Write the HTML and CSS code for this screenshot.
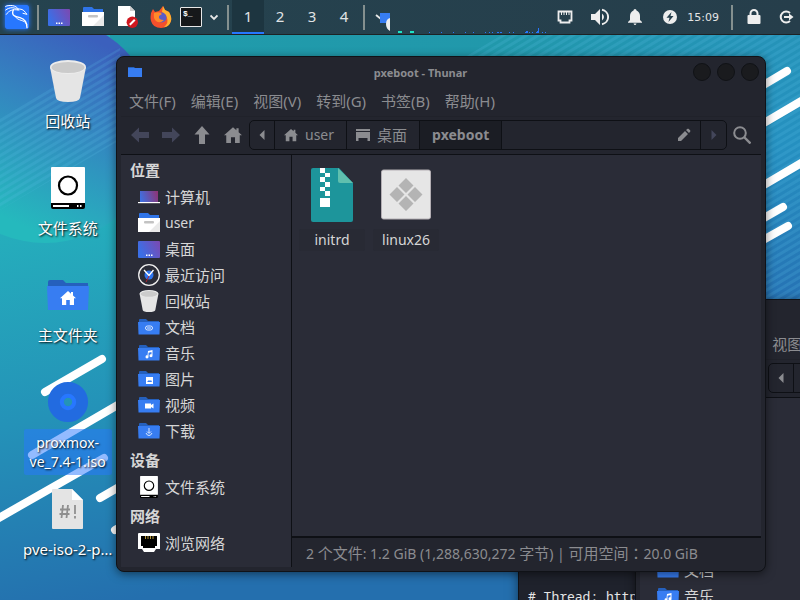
FILE: index.html
```
<!DOCTYPE html>
<html lang="zh-CN">
<head>
    <meta charset="UTF-8">
    <meta name="viewport" content="width=device-width, initial-scale=1.0">
    <title>pxeboot - Thunar</title>
    <link rel="stylesheet" href="styles.css">
</head>
<body>
    <!-- Shared icons -->
    <svg class="defs" aria-hidden="true">
        <defs>
            <linearGradient id="screenFill" x1="0" y1="0.4" x2="1" y2="0">
                <stop offset="0" stop-color="#3b6fe6"/>
                <stop offset="1" stop-color="#7d48b0"/>
            </linearGradient>
            <linearGradient id="laptopFill" x1="0" y1="0.5" x2="1" y2="0.3">
                <stop offset="0" stop-color="#3f6fe0"/>
                <stop offset="1" stop-color="#8c3577"/>
            </linearGradient>
        </defs>
        <symbol id="folder" viewBox="0 0 22 22">
            <path d="M1 4q0-1 1-1h6l2 2h11v4H1z" fill="#2560bd"/>
            <path d="M0 6h22l-.5 12.500h-21z" fill="#377df2"/>
        </symbol>
        <symbol id="user-folder" viewBox="0 0 22 22">
            <path d="M1 6V2q0-1 1-1h8l2 2h9v4H1z" fill="#2f74e8"/>
            <path d="M0 6h22v14H0z" fill="#fff"/>
            <path d="M22 9v11H11z" fill="#e9e9e9"/>
            <rect x="6" y="9" width="10" height="2.500" rx="1" fill="#c3c3c3"/>
        </symbol>
        <symbol id="screen" viewBox="0 0 22 22">
            <rect y="3" width="22" height="17" rx="1" fill="url(#screenFill)"/>
            <path d="M8 16.500h1.500v1.500H8zm2.500 0H12v1.500h-1.500zm2.500 0h1.500v1.500H13z" fill="#fff"/>
        </symbol>
        <symbol id="laptop" viewBox="0 0 22 22">
            <rect x="2" y="5" width="18" height="11" fill="url(#laptopFill)"/>
            <rect y="16" width="22" height="1.200" fill="#fff"/>
        </symbol>
        <symbol id="clock" viewBox="0 0 22 22">
            <circle cx="11" cy="11" r="10.300" fill="none" stroke="#eee" stroke-width="1.300"/>
            <circle cx="11" cy="11" r="4.500" fill="#2d74ee"/>
            <path d="M6 6l5 5.500L15.500 6" fill="none" stroke="#fff" stroke-width="1.300"/>
            <path d="M11 12l-3 6" stroke="#b3202c"/>
        </symbol>
        <symbol id="trash" viewBox="0 0 36 42">
            <path d="M0 7l6 31q1 4 12 4t12-4l6-31z" fill="#e5e5e5"/>
            <ellipse cx="18" cy="7" rx="18" ry="7" fill="#ececec"/>
            <ellipse cx="18" cy="7.500" rx="16.500" ry="5.500" fill="#cbcbcb"/>
        </symbol>
        <symbol id="drive" viewBox="0 0 36 42">
            <rect x="1" width="34" height="37" rx="1" fill="#fff"/>
            <circle cx="18" cy="18.500" r="9" fill="#fff" stroke="#000" stroke-width="2.200"/>
            <path d="M1 36h34v4q0 2-2 2H3q-2 0-2-2z" fill="#000"/>
            <path d="M3 38h16v2H3zm24 0h1.500v2H27zm3 0h1.500v2H30z" fill="#fff"/>
        </symbol>
        <symbol id="note" viewBox="0 0 22 22">
            <path d="M10 9l4.500-1v5.500a1.500 1.500 0 1 1-1-1.200V10l-3 .7v4a1.500 1.500 0 1 1-1-1.200z" fill="#fff"/>
        </symbol>
        <symbol id="house" viewBox="0 0 16 16">
            <path d="M8 1l3 2.700V2h2v3.500L16 8.300h-2V15H9.800v-5H6.200v5H2V8.300H0z"/>
        </symbol>
        <symbol id="tri-left" viewBox="0 0 6 10">
            <path d="M5.500 0v10L.5 5z"/>
        </symbol>
        <symbol id="arrow-left" viewBox="0 0 18 16">
            <path d="M0 8l8-7.500V5h10v6H8v4.500z"/>
        </symbol>
    </svg>

    <div class="desktop">
        <svg class="wallpaper" viewBox="0 0 800 600" preserveAspectRatio="xMidYMid slice" aria-hidden="true">
            <defs>
                <linearGradient id="sea" gradientUnits="userSpaceOnUse" x1="60" y1="220" x2="130" y2="600">
                    <stop offset="0" stop-color="#25aebc"/>
                    <stop offset="0.500" stop-color="#2492b8"/>
                    <stop offset="1" stop-color="#246fae"/>
                </linearGradient>
                <linearGradient id="seaRight" gradientUnits="userSpaceOnUse" x1="780" y1="40" x2="800" y2="300">
                    <stop offset="0" stop-color="#2593b8"/>
                    <stop offset="0.400" stop-color="#2590c0"/>
                    <stop offset="1" stop-color="#2672b4"/>
                </linearGradient>
                <linearGradient id="seaTop">
                    <stop offset="0" stop-color="#209cab"/>
                    <stop offset="0.600" stop-color="#2198ab"/>
                    <stop offset="1" stop-color="#2593b8"/>
                </linearGradient>
                <linearGradient id="ball" gradientUnits="userSpaceOnUse" x1="105" y1="45" x2="20" y2="225">
                    <stop offset="0" stop-color="#3b60bd"/>
                    <stop offset="0.400" stop-color="#3484c0"/>
                    <stop offset="1" stop-color="#25b9bd"/>
                </linearGradient>
                <pattern id="stripes" width="20" height="6" patternUnits="userSpaceOnUse" patternTransform="rotate(-31)">
                    <rect width="20" height="3" fill="#5cc4e8" opacity="0.180"/>
                </pattern>
            </defs>
            <rect width="800" height="600" fill="url(#sea)"/>
            <rect x="110" width="655" height="90" fill="url(#seaTop)"/>
            <rect x="764" width="36" height="300" fill="url(#seaRight)"/>
            <circle cx="45" cy="130" r="113" fill="url(#ball)"/>
            <path d="M0 118L120 48v92L0 210z" fill="url(#stripes)"/>
            <path d="M560 0h240v300h-40V60H460z" fill="url(#stripes)"/>
            <g stroke="#fff" stroke-width="8" stroke-linecap="round">
                <path d="M45 392L102 359M32 455L140 392M-10 523L104 458M100 498L150 469M115 530L150 510"/>
                <path d="M740 99L787 71M740 137L820 90M740 199L820 152M740 232L783 207M740 253L788 226"/>
            </g>
        </svg>

        <!-- Top panel -->
        <header class="panel">
            <nav class="launchers">
                <button class="launcher" aria-label="Applications">
                    <svg class="kali" viewBox="0 0 72 72">
                        <rect width="72" height="72" rx="4" fill="#2777ff"/>
                        <g fill="none" stroke="#fff" stroke-width="3" stroke-linecap="round">
                            <path d="M1 4C16-1 32 0 41 13"/>
                            <path d="M2 15C14 6 28 5 42 16"/>
                            <path d="M4 28C12 16 24 12 38 15"/>
                            <path d="M37 12C48 11 56 14 61 22L66 28L54 25"/>
                            <path d="M25 14C18 32 30 35 45 38C62 43 66 53 66 68" stroke-width="4"/>
                            <path d="M30 34C40 50 58 42 65 58"/>
                        </g>
                    </svg>
                </button>
                <span class="sep"></span>
                <button class="launcher" aria-label="Show desktop"><svg class="i22"><use href="#screen"/></svg></button>
                <button class="launcher" aria-label="Files"><svg class="i22"><use href="#user-folder"/></svg></button>
                <button class="launcher" aria-label="Text editor">
                    <svg class="i22" viewBox="0 0 22 22">
                        <path d="M2 0h12l5 5v15H2z" fill="#fff"/>
                        <path d="M14 0v5h5z" fill="#cfcfcf"/>
                        <circle cx="16.300" cy="16.300" r="5.700" fill="#d0171f"/>
                        <path d="M13.800 18.800l5-5" stroke="#fff" stroke-width="2"/>
                    </svg>
                </button>
                <button class="launcher" aria-label="Firefox">
                    <svg class="i22" viewBox="0 0 22 22">
                        <path d="M3 3l2 3 4-1 4-5 2 4 4 2q3 5 2 9-2 7-10 7T1 15Q-.5 8 3 3z" fill="#f4502c"/>
                        <path d="M13 0l2 4 4 2q3 5 2 9-2 6-7 6 5-4 3-9-1-4-5-6z" fill="#ffb02e"/>
                        <circle cx="11.500" cy="11.500" r="5" fill="#5a5cc8"/>
                        <path d="M4 7q6-2 8 1l-3 2q-1 4 5 4-4 4-8 1-3-3-2-8z" fill="#ff8a2a"/>
                    </svg>
                </button>
                <button class="launcher term-btn" aria-label="Terminal"><span class="term-icon">$_</span></button>
                <button class="launcher small" aria-label="More">
                    <svg class="i8" viewBox="0 0 8 8"><path d="M.5 2.500L4 6l3.500-3.500" fill="none" stroke="#e8e8e8" stroke-width="1.800"/></svg>
                </button>
                <span class="sep"></span>
            </nav>
            <nav class="workspaces">
                <button class="workspace current">1</button>
                <button class="workspace">2</button>
                <button class="workspace">3</button>
                <button class="workspace">4</button>
            </nav>
            <span class="sep"></span>
            <svg class="tasks" viewBox="0 0 16 20" aria-hidden="true">
                <path d="M1 4l5 4" stroke="#e8e8e8" stroke-width="1.800"/>
                <path d="M5 2h10v10H5z" fill="#377df2"/>
                <path d="M15 7v13q-4-2-4-7t4-6z" fill="#eee"/>
            </svg>
            <svg class="graph" viewBox="0 0 148 8" aria-hidden="true">
                <path d="M0 5h4v2H0zM12 5h4v2h-4z" fill="#1ee3c4"/>
                <path d="M31 6h1v1h-1zM43 6h1v1h-1zM55 6h1v1h-1zM67 6h1v1h-1zM75 6h1v1h-1zM87 6h1v1h-1zM91 6h1v1h-1zM94 6h1v1h-1zM99 6h2v1h-2zM102 6h2v1h-2zM111 6h1v1h-1zM115 6h1v1h-1zM127 6h1v-1h2v2h-3zM131 6h1v1h-1zM134 6h1v1h-1zM138 6h1V5h1V2h1v5h-3zM144 6h1v1h-1zM147 6h1v1h-1z" fill="#2777ff"/>
            </svg>
            <div class="tray">
                <button class="tray-btn" aria-label="Network">
                    <svg class="i18" viewBox="0 0 18 18"><path d="M2.500 3.500h13v9h-2v2h-9v-2h-2z" fill="none" stroke="#eee" stroke-width="1.800"/><path d="M5.500 4v3M8 4v3M10.500 4v3M13 4v3" stroke="#eee"/></svg>
                </button>
                <button class="tray-btn" aria-label="Volume">
                    <svg class="i18" viewBox="0 0 18 18"><path d="M0 6h4l5-5v16l-5-5H0z" fill="#eee"/><path d="M11 5.500q4 3.500 0 7z" fill="#eee"/><path d="M11 1.800a7.300 7.300 0 0 1 0 14.400" fill="none" stroke="#eee" stroke-width="1.900"/></svg>
                </button>
                <button class="tray-btn" aria-label="Notifications">
                    <svg class="i18" viewBox="0 0 18 18"><path d="M9 1q1.500 0 1.500 1.500Q14 4 14 8v4l2 2v.8H2V14l2-2V8q0-4 3.500-5.500Q7.500 1 9 1zM7.500 15.500h3Q10 17 9 17t-1.500-1.500z" fill="#eee"/></svg>
                </button>
                <button class="tray-btn" aria-label="Power">
                    <svg class="i18" viewBox="0 0 18 18"><circle cx="9" cy="9" r="7" fill="#eee"/><path d="M10.500 4L5.500 9.800h3L7.500 14l5-6h-3z" fill="#26404d"/></svg>
                </button>
                <time class="time">15:09</time>
                <span class="sep"></span>
                <button class="tray-btn" aria-label="Lock">
                    <svg class="i18" viewBox="0 0 18 18"><rect x="2.500" y="7" width="13" height="9" rx="1" fill="#eee"/><path d="M5.500 8V5.500a3.500 3.500 0 0 1 7 0V8" fill="none" stroke="#eee" stroke-width="2"/></svg>
                </button>
                <button class="tray-btn" aria-label="Log out">
                    <svg class="i18" viewBox="0 0 18 18"><path d="M13 5a5.500 5.500 0 1 0 0 8" fill="none" stroke="#eee" stroke-width="2"/><path d="M7 8h5V5.500L16.500 9 12 12.500V10H7z" fill="#eee"/></svg>
                </button>
            </div>
        </header>

        <!-- Desktop shortcuts -->
        <nav class="shortcuts">
            <a class="shortcut" href="#"><svg class="i48" viewBox="0 0 48 48"><use href="#trash" x="6" y="3" width="36" height="42"/></svg><span class="caption">回收站</span></a>
            <a class="shortcut" href="#"><svg class="i48" viewBox="0 0 48 48"><use href="#drive" x="6" y="3" width="36" height="42"/></svg><span class="caption">文件系统</span></a>
            <a class="shortcut" href="#">
                <svg class="i48" viewBox="0 0 48 48">
                    <path d="M4 11q0-2 2-2h13l3 3h22v6H4z" fill="#2560bd"/>
                    <path d="M3 15h42l-1 24H4z" fill="#377df2"/>
                    <use href="#house" x="16" y="19" width="16" height="16" fill="#fff"/>
                </svg>
                <span class="caption">主文件夹</span>
            </a>
            <a class="shortcut selected" href="#">
                <svg class="i48" viewBox="0 0 48 48">
                    <circle cx="24" cy="24" r="12.300" fill="none" stroke="#226be0" stroke-width="15.500"/>
                    <circle cx="24" cy="24" r="6.200" fill="none" stroke="#2777ff" stroke-width="4"/>
                </svg>
                <span class="caption" lang="en">proxmox-<br>ve_7.4-1.iso</span>
            </a>
            <a class="shortcut" href="#">
                <svg class="i48" viewBox="0 0 48 48">
                    <path d="M8 5q0-1 1-1h19l11 11v28q0 1-1 1H9q-1 0-1-1z" fill="#e4e4e4"/>
                    <path d="M28 4v11h11z" fill="#fff"/>
                    <path d="M19 20l-1.500 13M24 20l-1.500 13M16 24.500h10M15.500 29h10M31 20v9M31 31v2.500" stroke="#8f8f8f" stroke-width="1.800" fill="none"/>
                </svg>
                <span class="caption">pve-iso-2-p…</span>
            </a>
        </nav>

        <!-- Terminal behind the file managers -->
        <section class="window terminal">
            <pre class="terminal-text"># Thread: http</pre>
        </section>

        <!-- Second file manager, mostly covered -->
        <section class="window files back">
            <div class="titlebar"></div>
            <div class="menubar">
                <button class="menu">文件(F)</button>
                <button class="menu">编辑(E)</button>
                <button class="menu">视图(V)</button>
            </div>
            <div class="toolbar">
                <div class="tools">
                    <button class="tool" aria-label="Back"></button>
                    <button class="tool" aria-label="Forward"></button>
                    <button class="tool" aria-label="Up"></button>
                    <button class="tool" aria-label="Home"></button>
                </div>
                <div class="pathbar">
                    <button class="crumb edge" aria-label="Previous"><svg class="tri"><use href="#tri-left"/></svg></button>
                </div>
            </div>
            <div class="content">
                <aside class="sidebar">
                    <h2 class="group">位置</h2>
                    <a class="place" href="#"><svg class="i22"><use href="#laptop"/></svg>计算机</a>
                    <a class="place" href="#"><svg class="i22"><use href="#user-folder"/></svg><span lang="en">user</span></a>
                    <a class="place" href="#"><svg class="i22"><use href="#screen"/></svg>桌面</a>
                    <a class="place" href="#"><svg class="i22"><use href="#clock"/></svg>最近访问</a>
                    <a class="place" href="#"><svg class="i22"><use href="#trash"/></svg>回收站</a>
                    <a class="place" href="#"><svg class="i22"><use href="#folder"/></svg>文档</a>
                    <a class="place" href="#"><svg class="i22"><use href="#folder"/><use href="#note"/></svg>音乐</a>
                </aside>
                <div class="view"></div>
            </div>
        </section>

        <!-- Active file manager -->
        <section class="window files front">
            <div class="titlebar">
                <svg class="title-icon" viewBox="0 0 14 12"><path d="M0 1h6l1 1h7v3H0z" fill="#2560bd"/><path d="M0 2h14v9H0z" fill="#377df2"/></svg>
                <h1 class="title">pxeboot - Thunar</h1>
                <div class="controls">
                    <button class="control" aria-label="Minimize"></button>
                    <button class="control" aria-label="Maximize"></button>
                    <button class="control" aria-label="Close"></button>
                </div>
            </div>
            <div class="menubar">
                <button class="menu">文件(F)</button>
                <button class="menu">编辑(E)</button>
                <button class="menu">视图(V)</button>
                <button class="menu">转到(G)</button>
                <button class="menu">书签(B)</button>
                <button class="menu">帮助(H)</button>
            </div>
            <div class="toolbar">
                <div class="tools">
                    <button class="tool off" aria-label="Back"><svg class="i18"><use href="#arrow-left"/></svg></button>
                    <button class="tool off" aria-label="Forward"><svg class="i18" viewBox="0 0 18 18"><path d="M18 9l-8-7.500V6H0v6h10v4.500z"/></svg></button>
                    <button class="tool" aria-label="Up"><svg class="i18" viewBox="0 0 18 18"><path d="M9 0L1.500 8.500H6V18h6V8.500h4.500z"/></svg></button>
                    <button class="tool" aria-label="Home"><svg class="i18"><use href="#house"/></svg></button>
                </div>
                <div class="pathbar">
                    <button class="crumb edge" aria-label="Previous"><svg class="tri"><use href="#tri-left"/></svg></button>
                    <button class="crumb" lang="en"><svg class="i14"><use href="#house"/></svg>user</button>
                    <button class="crumb"><svg class="i14" viewBox="0 0 14 14"><path d="M0 1h14v2H0zM0 4h14v9h-2.500v-3h-9v3H0z"/></svg>桌面</button>
                    <button class="crumb here" lang="en">pxeboot</button>
                    <button class="crumb edit" aria-label="Edit path"><svg class="i14" viewBox="0 0 14 14"><path d="M1 10l7-7 3 3-7 7H1zM9 2l1.500-1.300h1L13.300 2.500v1L12 5z"/></svg></button>
                    <button class="crumb edge off" aria-label="Next"><svg class="tri flip"><use href="#tri-left"/></svg></button>
                </div>
                <button class="search" aria-label="Search"><svg class="i18" viewBox="0 0 18 18"><circle cx="7" cy="7" r="5.800" fill="none" stroke="#8b8c90" stroke-width="2"/><path d="M11 11l6.500 6.500" stroke="#8b8c90" stroke-width="2.400"/></svg></button>
            </div>
            <div class="content">
                <aside class="sidebar">
                    <h2 class="group">位置</h2>
                    <a class="place" href="#"><svg class="i22"><use href="#laptop"/></svg>计算机</a>
                    <a class="place" href="#"><svg class="i22"><use href="#user-folder"/></svg><span lang="en">user</span></a>
                    <a class="place" href="#"><svg class="i22"><use href="#screen"/></svg>桌面</a>
                    <a class="place" href="#"><svg class="i22"><use href="#clock"/></svg>最近访问</a>
                    <a class="place" href="#"><svg class="i22"><use href="#trash"/></svg>回收站</a>
                    <a class="place" href="#"><svg class="i22" viewBox="0 0 22 22"><use href="#folder"/><path d="M9.500 10h3a2 2 0 0 1 0 4h-3a2 2 0 0 1 0-4zM9 12h4" fill="none" stroke="#dbe8ff"/></svg>文档</a>
                    <a class="place" href="#"><svg class="i22"><use href="#folder"/><use href="#note"/></svg>音乐</a>
                    <a class="place" href="#"><svg class="i22" viewBox="0 0 22 22"><use href="#folder"/><rect x="8" y="9" width="7" height="7" fill="#fff"/><path d="M9 14l2-2 1 1 1-1 1 2z" fill="#377df2"/></svg>图片</a>
                    <a class="place" href="#"><svg class="i22" viewBox="0 0 22 22"><use href="#folder"/><path d="M7 9.500h6v1.500l2.500-1.500v5L13 13v1.500H7z" fill="#fff"/></svg>视频</a>
                    <a class="place" href="#"><svg class="i22" viewBox="0 0 22 22"><use href="#folder"/><path d="M11 8v5M9 11.500l2 2 2-2M8 13q1 2.500 3 2.500t3-2.500" fill="none" stroke="#dbe8ff"/></svg>下载</a>
                    <h2 class="group">设备</h2>
                    <a class="place" href="#"><svg class="i22"><use href="#drive"/></svg>文件系统</a>
                    <h2 class="group">网络</h2>
                    <a class="place" href="#"><svg class="i22" viewBox="0 0 22 22"><path d="M1 1h20q1 0 1 1v15h-4l-2 3H6l-2-3H0V2q0-1 1-1z" fill="#fff"/><path d="M3 4h16v10h-2v2H5v-2H3z" fill="#000"/><path d="M7.500 4v3M10 4v3M12.500 4v3M15 4v3" stroke="#b5963a"/></svg>浏览网络</a>
                </aside>
                <div class="view">
                    <div class="grid">
                        <a class="file" href="#">
                            <svg class="i56" viewBox="0 0 56 56">
                                <path d="M7 3q0-2 2-2h26l14 15v37q0 2-2 2H9q-2 0-2-2z" fill="#1d959b"/>
                                <path d="M34 1l15 15H36q-2 0-2-2z" fill="#5fbfae"/>
                                <path d="M16 1h5v5h-5zM21 6h5v4h-5zM16 10h5v5h-5zM21 15h5v5h-5zM16 20h5v4h-5zM21 24h5v5h-5zM16 31h10v9H16z" fill="#fff"/>
                            </svg>
                            <span class="filename" lang="en">initrd</span>
                        </a>
                        <a class="file" href="#">
                            <svg class="i56" viewBox="0 0 56 56">
                                <rect x="3.500" y="3" width="49" height="49" rx="2" fill="#e6e6e6" stroke="#b3aeb3"/>
                                <path d="M28 11l7.500 7.500L28 26l-7.500-7.500zM28 29l7.500 7.500L28 44l-7.500-7.500zM19 20l7.500 7.500L19 35l-7.500-7.500zM37 20l7.500 7.500L37 35l-7.500-7.500z" fill="#b4b4b4"/>
                            </svg>
                            <span class="filename" lang="en">linux26</span>
                        </a>
                    </div>
                    <footer class="status" lang="en">2 <span class="zh">个文件</span>: 1.2 GiB (1,288,630,272 <span class="zh">字节</span>) | <span class="zh">可用空间：</span>20.0 GiB</footer>
                </div>
            </div>
        </section>
    </div>
</body>
</html>
```

FILE: styles.css
```
* {
    box-sizing: border-box;
}

body {
    margin: 0;
    font-family: "Noto Sans", "Noto Sans CJK SC", sans-serif;
    font-size: 15px;
    color: #d6d6d6;
}

a {
    color: inherit;
    text-decoration: none;
}

button {
    display: flex;
    align-items: center;
    justify-content: center;
    margin: 0;
    padding: 0;
    border: none;
    background: none;
    font: inherit;
    color: inherit;
    fill: currentColor;
}

svg {
    display: block;
    flex: none;
}

/* Latin text runs one size smaller than Chinese */
[lang="en"] {
    font-size: 14px;
}

.zh {
    font-family: "Noto Sans CJK TC", sans-serif;
    font-size: 15px;
}

.defs {
    position: absolute;
    width: 0;
    height: 0;
}

.i8 { width: 8px; height: 8px; }
.i14 { width: 14px; height: 14px; }
.i18 { width: 18px; height: 18px; }
.i22 { width: 22px; height: 22px; }
.i48 { width: 48px; height: 48px; }
.i56 { width: 56px; height: 56px; }

.desktop {
    position: relative;
    height: 100vh;
    overflow: hidden;
}

.wallpaper {
    position: absolute;
    width: 100%;
    height: 100%;
}

/* Panel */
.panel {
    position: relative;
    display: flex;
    align-items: center;
    height: 35px;
    padding-left: 4px;
    background: linear-gradient(90deg, #25434f, #263e4b);
    border-bottom: 1px solid #1e2224;
}

.launchers {
    display: flex;
    align-items: center;
}

.launcher {
    width: 34px;
    height: 34px;
}

.launcher:first-child {
    width: 26px;
}

.kali {
    width: 24px;
    height: 24px;
    border-radius: 2px;
    box-shadow: 0 0 5px #2777ff;
}

.launcher.term-btn {
    width: 26px;
}

.launcher.small {
    width: 20px;
}

.sep {
    width: 2px;
    height: 25px;
    margin: 0 3px;
    background: #84908f;
}

.launchers .sep:nth-child(2) {
    margin: 0 3px 0 7px;
}

.term-icon {
    width: 22px;
    height: 20px;
    padding-left: 2px;
    border: 1px solid #e8e8e8;
    border-radius: 1px;
    background: #16181a;
    color: #fff;
    font: bold 8px/11px "Liberation Mono", monospace;
    text-align: left;
}

.workspaces {
    display: flex;
}

.workspace {
    width: 32px;
    height: 34px;
    padding-bottom: 2px;
    color: #e0e4e5;
}

.workspace.current {
    padding-bottom: 0;
    background: #1d3540;
    border-bottom: 2px solid #2777ff;
}

.tasks {
    width: 16px;
    height: 20px;
    margin: 8px 0 0 7px;
}

.graph {
    width: 148px;
    height: 8px;
    margin-left: 7px;
    align-self: flex-end;
}

.tray {
    display: flex;
    align-items: center;
    margin-left: auto;
}

.tray-btn {
    width: 35px;
    height: 34px;
}

.tray-btn:last-child {
    width: 29px;
}

.time {
    font-family: "DejaVu Sans", sans-serif;
    font-size: 11px;
    color: #e4e4e4;
}

.time + .sep {
    margin: 0 3px 0 12px;
}

/* Desktop shortcuts */
.shortcuts {
    position: relative;
    display: grid;
    grid-auto-rows: 107px;
    width: 96px;
    margin: 22px 0 0 19px;
}

.shortcut {
    display: flex;
    flex-direction: column;
    align-items: center;
    gap: 3px;
    color: #fff;
}

.caption {
    padding: 4px;
    line-height: 19px;
    text-align: center;
    white-space: nowrap;
    text-shadow: 1px 1px 2px #000;
}

.selected .caption {
    padding: 4px 6px;
    border-radius: 2px;
    background: rgba(39, 119, 255, 0.5);
}

/* Windows */
.window {
    position: absolute;
    border: 1px solid #101217;
    background: #23252e;
    box-shadow: 0 2px 10px rgba(0, 0, 0, 0.5);
}

.files {
    display: flex;
    flex-direction: column;
    width: 650px;
    height: 516px;
    padding: 0 4px 4px;
    border-radius: 8px;
    color: #8b8c90;
}

.front {
    left: 116px;
    top: 56px;
}

.back {
    left: 635px;
    top: 299px;
}

.terminal {
    left: 518px;
    top: 440px;
    width: 240px;
    height: 260px;
    padding: 147px 9px 0;
    background: #1f222c;
}

.terminal-text {
    margin: 0;
    font: 13px/16px "Noto Sans Mono", "DejaVu Sans Mono", monospace;
    color: #e6e6e6;
}

.titlebar {
    display: flex;
    align-items: center;
    height: 30px;
    padding: 0 2px 0 7px;
}

.title-icon {
    width: 14px;
    height: 12px;
}

.title {
    flex: 1;
    margin: 0;
    padding-left: 6px;
    font-size: 11px;
    text-align: center;
}

.controls {
    display: flex;
    gap: 6px;
}

.control {
    width: 18px;
    height: 18px;
    border: 1px solid #101216;
    border-radius: 50%;
    background: #1a1b1e;
}

.menubar {
    display: flex;
    gap: 15px;
    height: 30px;
    padding: 0 0 2px 8px;
    border-bottom: 1px solid #20222a;
}

.menu {
    white-space: nowrap;
}

.toolbar {
    display: flex;
    align-items: center;
    height: 38px;
    padding: 0 0 2px 3px;
    border-bottom: 1px solid #0e1015;
}

.tools {
    display: flex;
}

.tool {
    width: 31px;
    height: 30px;
}

.off {
    color: #43465a;
}

.pathbar {
    display: flex;
    flex: 1;
    height: 30px;
    margin-left: 1px;
    border: 1px solid #0e1015;
    border-radius: 5px;
    overflow: hidden;
}

.crumb {
    gap: 7px;
    padding: 0 12px 0 9px;
    border-right: 1px solid #0e1015;
}

.crumb.edge {
    width: 25px;
    padding: 0;
}

.crumb:last-child {
    border-right: none;
}

.back .crumb.edge {
    border-right: 1px solid #0e1015;
}

.crumb.here {
    padding: 0 12px;
    background: #1b1d24;
    font-weight: bold;
}

.crumb.edit {
    flex: 1;
    justify-content: flex-end;
    padding: 0 9px;
}

.tri {
    width: 6px;
    height: 10px;
}

.flip {
    transform: scaleX(-1);
}

.search {
    width: 34px;
    padding-right: 4px;
}

.content {
    display: flex;
    flex: 1;
    min-height: 0;
    background: #2a2c37;
}

.sidebar {
    width: 171px;
    padding-top: 1px;
    border-right: 1px solid #0e1015;
    color: #d6d6d6;
}

.group {
    margin: 0;
    padding-left: 9px;
    font-size: 15px;
    line-height: 28px;
}

.place + .group {
    padding-top: 2px;
}

.place {
    display: flex;
    align-items: center;
    gap: 5px;
    height: 26px;
    padding-left: 17px;
    line-height: 20px;
}

.view {
    display: flex;
    flex: 1;
    flex-direction: column;
}

.grid {
    display: flex;
    flex: 1;
    align-items: flex-start;
    gap: 8px;
    padding: 12px 7px;
    color: #d6d6d6;
}

.file {
    display: flex;
    flex-direction: column;
    align-items: center;
    gap: 6px;
    width: 66px;
}

.filename {
    width: 100%;
    border-radius: 2px;
    background: #282a34;
    line-height: 22px;
    text-align: center;
}

.status {
    height: 31px;
    padding: 0 14px;
    border-top: 2px solid #0e1015;
    background: #23252e;
    line-height: 29px;
    white-space: nowrap;
}
```
